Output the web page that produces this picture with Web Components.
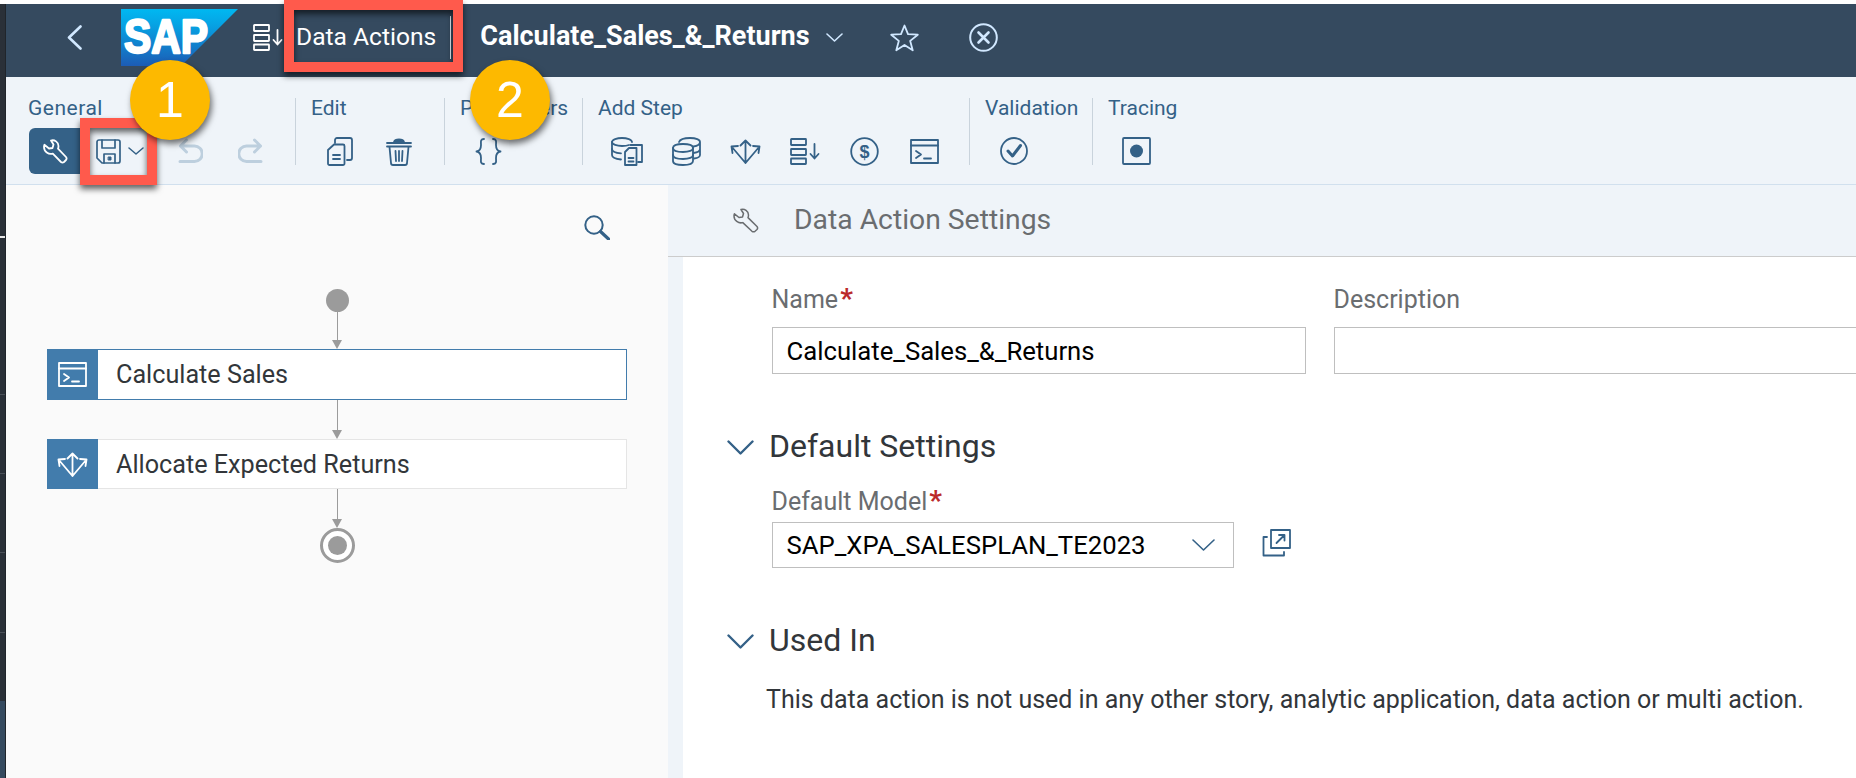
<!DOCTYPE html>
<html lang="en">
<head>
<meta charset="utf-8">
<title>Data Actions</title>
<style>
  html,body{margin:0;padding:0;background:#fff;overflow:hidden;height:778px}
  body{font-family:Roboto,"Open Sans",sans-serif}
</style>
</head>
<body>
<sac-app>
  <sac-strip slot="strip"></sac-strip>
  <sac-shellbar slot="main">
    <sac-icon name="back" style="margin-left:61px"></sac-icon>
    <sap-logo style="margin-left:39px"></sap-logo>
    <sac-icon name="list" style="margin-left:15px;color:#fff"></sac-icon>
    <shell-text style="margin-left:13px">Data Actions</shell-text>
    <shell-sep></shell-sep>
    <shell-title>Calculate_Sales_&amp;_Returns</shell-title>
    <sac-icon name="chev" style="margin-left:16px"></sac-icon>
    <sac-icon name="star" style="margin-left:47px"></sac-icon>
    <sac-icon name="xcircle" style="margin-left:50px"></sac-icon>
  </sac-shellbar>
  <sac-toolbar slot="main">
    <tb-group label="General" style="width:267px;margin-left:22px;letter-spacing:.5px">
      <tb-toggle><sac-icon name="wrench" style="color:#fff"></sac-icon></tb-toggle>
      <tb-split><sac-icon name="save"></sac-icon><sac-icon name="chevsm"></sac-icon></tb-split>
      <tb-slot style="color:#bdcfde"><sac-icon name="undo"></sac-icon></tb-slot>
      <tb-slot style="color:#bdcfde"><sac-icon name="redo"></sac-icon></tb-slot>
    </tb-group>
    <tb-sep></tb-sep>
    <tb-group label="Edit" style="width:133px;margin-left:15px">
      <tb-slot><sac-icon name="copy"></sac-icon></tb-slot>
      <tb-slot><sac-icon name="trash"></sac-icon></tb-slot>
    </tb-group>
    <tb-sep></tb-sep>
    <tb-group label="Parameters" style="width:122px;margin-left:15px">
      <tb-slot><sac-icon name="braces"></sac-icon></tb-slot>
    </tb-group>
    <tb-sep></tb-sep>
    <tb-group label="Add Step" style="width:371px;margin-left:15px">
      <tb-slot><sac-icon name="dbcopy"></sac-icon></tb-slot>
      <tb-slot><sac-icon name="db"></sac-icon></tb-slot>
      <tb-slot><sac-icon name="alloc"></sac-icon></tb-slot>
      <tb-slot><sac-icon name="list"></sac-icon></tb-slot>
      <tb-slot><sac-icon name="dollar"></sac-icon></tb-slot>
      <tb-slot><sac-icon name="console"></sac-icon></tb-slot>
    </tb-group>
    <tb-sep></tb-sep>
    <tb-group label="Validation" style="width:107px;margin-left:15px">
      <tb-slot><sac-icon name="check"></sac-icon></tb-slot>
    </tb-group>
    <tb-sep></tb-sep>
    <tb-group label="Tracing" style="width:90px;margin-left:15px">
      <tb-slot><sac-icon name="trace"></sac-icon></tb-slot>
    </tb-group>
  </sac-toolbar>
  <sac-body slot="main">
    <flow-panel slot="left">
      <flow-start></flow-start>
      <flow-link style="margin-top:-2px"></flow-link>
      <flow-node icon="console" selected>Calculate Sales</flow-node>
      <flow-link></flow-link>
      <flow-node icon="alloc">Allocate Expected Returns</flow-node>
      <flow-link></flow-link>
      <flow-end></flow-end>
    </flow-panel>
    <settings-panel slot="right">
      <span slot="title">Data Action Settings</span>
      <field-row>
        <form-field label="Name" required style="width:534px" value="Calculate_Sales_&amp;_Returns"></form-field>
        <form-field label="Description" style="width:640px;margin-left:28px"></form-field>
      </field-row>
      <section-head style="margin-top:55px">Default Settings</section-head>
      <form-select label="Default Model" value="SAP_XPA_SALESPLAN_TE2023" style="margin-top:23px"></form-select>
      <section-head style="margin-top:55px">Used In</section-head>
      <note-text>This data action is not used in any other story, analytic application, data action or multi action.</note-text>
    </settings-panel>
  </sac-body>

  <hl-box slot="over" style="left:80px;top:118px;width:77px;height:67px"></hl-box>
  <hl-box slot="over" style="left:284px;top:0;width:179px;height:72px"></hl-box>
  <call-out slot="over" style="left:130px;top:60px">1</call-out>
  <call-out slot="over" style="left:470px;top:60px">2</call-out>
</sac-app>

<script>
const ICONS = {
  back:{w:15,h:25,sw:2.6,c:'#d1e8ff',d:'<path d="M13.5 1.5 2 12.5 13.5 23.5"/>'},
  chev:{w:17,h:9,sw:1.6,c:'#d1e8ff',d:'<path d="M1 1 8.500 8 16 1"/>'},
  chevsm:{w:16,h:8,sw:1.5,d:'<path d="M1 1 8 7 15 1"/>'},
  star:{w:29,h:28,sw:1.8,c:'#d1e8ff',d:'<path d="M14.500 1.500 18 10.100 27.800 10.700 20.200 16.900 22.700 26.300 14.500 21 6.300 26.300 8.800 16.900 1.200 10.700 11 10.100Z"/>'},
  xcircle:{w:29,h:29,sw:2,c:'#d1e8ff',d:'<circle cx="14.500" cy="14.500" r="13.300"/><path stroke-width="2.600" d="M9.500 9.500 19.500 19.500M19.500 9.500 9.500 19.500"/>'},
  list:{w:30,h:27,sw:1.8,d:'<rect x="1" y="1" width="15" height="6" rx=".5"/><rect x="1" y="11" width="15" height="6" rx=".5"/><rect x="1" y="20.500" width="15" height="5.500" rx=".5"/><path d="M24.500 6V20M20.500 16 24.500 20.500 28.500 16"/>'},
  wrench:{w:25,h:25,sw:1.8,d:'<path d="M8 1.500C11.500.5 15.500 3 15.500 7 15.500 8 15.300 9 15 9.600L23 18C23.800 19 23.800 20 23 21L21 23C20 23.800 19 23.800 18 23L9.800 14.600C5.500 15.800 1 12.500 1 8 1 7.200 1.100 6.500 1.400 5.800L6 9.500 9.500 9 10.500 5.500Z"/>'},
  wrenchg:{w:26,h:25,sw:1.500,d:'<path d="M8 1.500C11.500.5 15.500 3 15.500 7 15.500 8 15.300 9 15 9.600L24 18.500C24.800 19.500 24.800 20.500 24 21.500L22 23.300C21 24 20 24 19 23.300L9.800 14.600C5.500 15.800 1 12.500 1 8 1 7.200 1.100 6.500 1.400 5.800L6 9.500 9.500 9 10.500 5.500Z"/>'},
  save:{w:25,h:25,sw:1.700,d:'<path d="M3 1H22A2 2 0 0 1 24 3V22A2 2 0 0 1 22 24H6L1 19V3A2 2 0 0 1 3 1Z"/><path d="M6 1V9H19V1M8 24V15H19V24"/><rect x="12.500" y="18" width="2.500" height="3" fill="currentColor" stroke-width="1"/>'},
  undo:{w:25,h:26,sw:3,d:'<path d="M8.500 2 2.500 8 8.500 14M2.500 8H16.500A7.500 7.500 0 0 1 16.500 23.500H2"/>'},
  redo:{w:25,h:26,sw:3,d:'<path d="M16.500 2 22.500 8 16.500 14M22.500 8H8.500A7.500 7.500 0 0 0 8.500 23.500H23"/>'},
  copy:{w:26,h:29,sw:1.800,d:'<path d="M8 6V3A2 2 0 0 1 10 1H23A2 2 0 0 1 25 3V21A2 2 0 0 1 23 23H20"/><path d="M1 13 7 7.500H16A1.500 1.500 0 0 1 17.500 9V26.500A1.500 1.500 0 0 1 16 28H2.500A1.500 1.500 0 0 1 1 26.500Z"/><path d="M6 18H13M6 22H13"/>'},
  trash:{w:26,h:29,sw:1.800,d:'<path d="M1 6H25M1 9.500H25"/><path d="M8 5C9 1.500 17 1.500 18 5Z" fill="currentColor"/><path d="M3.500 10 5 26A2 2 0 0 0 7 28H19A2 2 0 0 0 21 26L22.500 10M9.500 14 10 24M13 14V24M16.500 14 16 24"/>'},
  braces:{w:27,h:27,sw:1.800,d:'<path d="M9 1C5 1 6 4 6 7 6 11 5 13 1.500 13.500 5 14 6 16 6 20 6 23 5 26 9 26M18 1C22 1 21 4 21 7 21 11 22 13 25.500 13.500 22 14 21 16 21 20 21 23 22 26 18 26"/>'},
  dbcopy:{w:32,h:29,sw:1.800,d:'<path d="M21 5C21 2.500 16 1 11 1 6 1 1 2.500 1 5V18C1 20.500 5 22 10 22.500"/><path d="M1 5C1 7.500 6 9 11 9 13 9 16 8.800 18 8M1 12C1 14.500 5 16 10 16.300"/><path d="M14 15 18 11H25.500V28H14Z"/><path d="M19.500 8H31V25H27M17.500 21H22.500M17.500 24.500H22.500"/>'},
  db:{w:29,h:29,sw:1.800,d:'<path d="M1 11C1 8 5 7 11 7 17 7 21 8 21 11V24C21 27 17 28 11 28 5 28 1 27 1 24Z"/><path d="M1 11C1 13.500 5 15 11 15 17 15 21 13.500 21 11M1 18C1 20.500 5 22 11 22 17 22 21 20.500 21 18"/><path d="M7 5C8 2.500 13 1 18 1 24 1 28 2.500 28 5V18C28 19.500 26 21 22 21.500M21.500 9.500C25 9 28 7.500 28 5M21.500 16C25 15.500 28 14 28 12"/>'},
  alloc:{w:31,h:25,sw:1.800,d:'<path d="M15.500 24V1.500M10.500 6.500 15.500 1.500 20.500 6.500M15.500 24 1.500 7.500M15.500 24 29.500 7.500M2.500 14 1.500 7.500 8 7M28.500 14 29.500 7.500 23 7"/>'},
  dollar:{w:29,h:29,sw:1.800,d:'<circle cx="14.500" cy="14.500" r="13.300"/><text x="14.500" y="21" text-anchor="middle" font-family="Liberation Sans" font-weight="700" font-size="18" fill="currentColor" stroke="none">$</text>'},
  console:{w:29,h:25,sw:1.800,d:'<rect x="1" y="1" width="27" height="23"/><path d="M1 6.500H28M6 12 11 15.500 6 19M14 19.500H21"/>'},
  check:{w:30,h:28,sw:1.800,d:'<circle cx="15" cy="14" r="13"/><path stroke-width="3" d="M9 14 13.500 19 21.500 8.500"/>'},
  trace:{w:29,h:28,sw:1.800,d:'<rect x="1" y="1" width="27" height="26" rx="1"/><circle cx="14.500" cy="14" r="6.500" fill="currentColor" stroke="none"/>'},
  search:{w:26,h:25,sw:2,d:'<circle cx="10" cy="10" r="8.700"/><path stroke-width="3.200" d="M16.500 16.500 24.500 24"/>'},
  caret:{w:27,h:15,sw:2.400,d:'<path d="M1.500 1.500 13.500 13.500 25.500 1.500"/>'},
  selchev:{w:23,h:12,sw:1.600,d:'<path d="M1 1 11.500 11 22 1"/>'},
  open:{w:29,h:28,sw:1.800,d:'<rect x="9" y="1" width="19" height="18"/><path d="M14.500 14 22.500 6M17 6H22.500V11.500"/><path d="M5 8H1.500V26.500H22V23"/>'}
};

function define(name, css, html, init){
  customElements.define(name, class extends HTMLElement{
    constructor(){
      super();
      const r = this.attachShadow({mode:'open'});
      r.innerHTML = '<style>'+css+'</style>'+(typeof html==='function'?html(this):html);
    }
    connectedCallback(){ if(init) init(this); }
  });
}

define('sac-icon', ':host{display:inline-flex;flex:none;line-height:0}svg{display:block;fill:none;stroke:currentColor;stroke-linecap:round;stroke-linejoin:round}', '', el=>{
  const i = ICONS[el.getAttribute('name')];
  if(i.c && !el.style.color) el.style.color = i.c;
  el.shadowRoot.querySelector('style').insertAdjacentHTML('afterend',
    `<svg width="${i.w}" height="${i.h}" viewBox="0 0 ${i.w} ${i.h}" stroke-width="${i.sw}" aria-hidden="true">${i.d}</svg>`);
});

define('sac-app', `
  :host{display:grid;grid-template-columns:6px 1850px;width:1856px;height:778px;padding-top:4px;box-sizing:border-box;position:relative;overflow:hidden}
  .main{display:flex;flex-direction:column;min-width:0;height:774px}
`, `<slot name="strip"></slot><div class="main"><slot name="main"></slot></div><slot name="over"></slot>`);

define('sac-strip', `
  :host{display:flex;flex-direction:column;width:6px;height:774px;box-sizing:border-box;background:#2a3038;border-right:1px solid #20252b}
  i{display:block;flex:none;width:100%;height:1px;background:#4a5058}
  i.w{background:#e8e8e8;height:2px}
  b{display:block;flex:1;background:#354a5f}
`, `<div style="height:232px"></div><i class="w"></i><div style="height:156px"></div><i></i><div style="height:78px"></div><i></i><div style="height:78px"></div><i></i><div style="height:79px"></div><i></i><div style="height:68px"></div><b></b>`);

define('sac-shellbar', `
  :host{display:flex;align-items:center;flex:none;height:73px;box-sizing:border-box;padding-bottom:6px;background:#354a5f;color:#fff}
`, `<slot></slot>`);

define('sap-logo', `
  :host{display:block;flex:none;width:117px;height:57px}
  svg{display:block}
  text{font-family:"Liberation Sans",sans-serif;font-weight:700;fill:#fff;stroke:#fff;stroke-width:2.400px;stroke-linejoin:round}
`, `<svg width="117" height="57" viewBox="0 0 117 57"><defs><linearGradient id="g" x1="0" y1="0" x2="0" y2="1"><stop offset="0" stop-color="#00b8f1"/><stop offset=".25" stop-color="#06a5e5"/><stop offset="1" stop-color="#1c5cb5"/></linearGradient></defs><path d="M0 0H117L60 57H0Z" fill="url(#g)"/><text x="3" y="44" font-size="49" textLength="84" lengthAdjust="spacingAndGlyphs">SAP</text></svg>`);

define('shell-text', `:host{display:block;flex:none;font-size:24.600px;line-height:30px;margin-top:-2px;color:#fff}`, `<slot></slot>`);
define('shell-sep', `:host{display:block;flex:none;width:1px;height:43px;margin-left:14px;background:#e4eaf0}`, ``);
define('shell-title', `:host{display:block;flex:none;margin-left:29px;margin-top:-3px;font-size:27px;line-height:30px;font-weight:700;color:#fff}`, `<slot></slot>`);

define('sac-toolbar', `
  :host{display:flex;align-items:flex-start;flex:none;height:107px;background:#eff4f9;border-bottom:1px solid #d1e0ee;box-sizing:content-box;color:#346187}
`, `<slot></slot>`);

define('tb-group', `
  :host{display:block;flex:none;padding-top:21px;box-sizing:border-box}
  .l{font-size:21px;line-height:20px;color:#346187;white-space:nowrap;height:20px}
  .r{display:flex;align-items:center;height:46px;margin:10px 0 0 -1px}
`, el=>`<div class="l">${el.getAttribute('label')}</div><div class="r"><slot></slot></div>`);
define('tb-sep', `:host{display:block;flex:none;width:1px;height:67px;margin-top:21px;background:#c9d3dc}`, ``);
define('tb-slot', `:host{display:flex;flex:none;width:59.500px;height:46px;align-items:center;justify-content:center}`, `<slot></slot>`);
define('tb-toggle', `:host{display:flex;flex:none;width:52px;height:46px;margin-left:2px;align-items:center;justify-content:center;background:#346187;border-radius:6px 0 0 6px}`, `<slot></slot>`);
define('tb-split', `:host{display:flex;flex:none;width:80px;height:46px;align-items:center;gap:7px;box-sizing:border-box;padding-left:15px}`, `<slot></slot>`);

define('sac-body', `
  :host{display:flex;flex:1;min-height:0}
  ::slotted([slot=left]){flex:none;width:662px}
  ::slotted([slot=right]){flex:1;min-width:0}
`, `<slot name="left"></slot><slot name="right"></slot>`);

define('flow-panel', `
  :host{display:flex;flex-direction:column;background:#fafafa;box-sizing:border-box;height:593px}
  .s{display:flex;justify-content:flex-end;padding:30px 58px 0 0;height:25px;box-sizing:content-box}
  .c{display:flex;flex-direction:column;align-items:center;width:580px;margin:49px 0 0 41px}
`, `<div class="s"><sac-icon name="search" style="color:#346187"></sac-icon></div><div class="c"><slot></slot></div>`);
define('flow-start', `:host{display:block;flex:none;width:23px;height:23px;border-radius:50%;background:#9b9b9b}`, ``);
define('flow-link', `
  :host{display:flex;flex-direction:column;align-items:center;flex:none}
  .l{width:1px;height:30px;background:#9b9b9b}
  .a{width:0;height:0;border-left:5.500px solid transparent;border-right:5.500px solid transparent;border-top:9px solid #9b9b9b}
`, `<div class="l"></div><div class="a"></div>`);
define('flow-node', `
  :host{display:flex;flex:none;align-self:stretch;height:50px;box-sizing:border-box;background:#fff;border:1px solid #e5e5e5;border-left:0;color:#32363a;font-size:25.200px}
  :host([selected]){height:51px;border-color:#427cac}
  .i{display:flex;flex:none;width:51px;margin:-1px 0;align-items:center;justify-content:center;background:#427cac;color:#fff}
  .t{display:flex;align-items:center;padding-left:18px;white-space:nowrap}
`, el=>`<div class="i"><sac-icon name="${el.getAttribute('icon')}"></sac-icon></div><div class="t"><slot></slot></div>`);
define('flow-end', `
  :host{display:flex;flex:none;width:35px;height:35px;box-sizing:border-box;border:3px solid #9b9b9b;border-radius:50%;align-items:center;justify-content:center;background:#fff}
  i{display:block;width:19px;height:19px;border-radius:50%;background:#9b9b9b}
`, `<i></i>`);

define('settings-panel', `
  :host{display:flex;flex-direction:column;background:#eff4f9;height:593px;overflow:hidden}
  .h{display:flex;align-items:center;flex:none;height:71px;box-sizing:content-box;padding-left:65px;border-bottom:1px solid #cccccc;color:#6a6d70}
  .t{margin-left:35px;font-size:28.300px;line-height:32px;margin-top:-2px;color:#6a6d70}
  .c{flex:1;margin-left:15px;background:#fff;padding:29px 0 0 88.500px;overflow:hidden}
`, `<div class="h"><sac-icon name="wrenchg"></sac-icon><div class="t"><slot name="title"></slot></div></div><div class="c"><slot></slot></div>`);
define('field-row', `:host{display:flex;white-space:nowrap}`, `<slot></slot>`);
define('form-field', `
  :host{display:block;flex:none}
  .l{font-size:25px;line-height:28px;color:#6a6d70;white-space:nowrap}
  .r{color:#bb2a2a;font-weight:700;margin-left:2px;font-size:28px;line-height:20px}
  .b{height:47px;margin-top:13px;box-sizing:border-box;border:1px solid #bfbfbf;background:#fff;padding:0 14px;display:flex;align-items:center;font-size:25.700px;color:#000;white-space:nowrap}
`, el=>`<div class="l">${el.getAttribute('label')}${el.hasAttribute('required')?'<span class="r">*</span>':''}</div><div class="b">${(el.getAttribute('value')||'').replace(/&/g,'&amp;')}</div>`);
define('section-head', `
  :host{display:flex;align-items:center;height:36px;box-sizing:border-box;padding-bottom:2px;margin-left:-44.500px;font-size:32px;color:#32363a;white-space:nowrap}
  sac-icon{color:#346187;margin-right:15px;margin-top:3px}
`, `<sac-icon name="caret"></sac-icon><slot></slot>`);
define('form-select', `
  :host{display:block}
  .l{font-size:25px;line-height:28px;color:#6a6d70;white-space:nowrap}
  .r{color:#bb2a2a;font-weight:700;margin-left:2px;font-size:28px;line-height:20px}
  .w{display:flex;align-items:center;margin-top:6px}
  .b{width:462px;height:46px;box-sizing:border-box;border:1px solid #bfbfbf;background:#fff;padding:0 18px 0 14px;display:flex;align-items:center;justify-content:space-between;font-size:25.700px;color:#000;white-space:nowrap}
  .o{margin-left:28px;color:#346187;margin-top:-4px}
  sac-icon.d{color:#346187}
`, el=>`<div class="l">${el.getAttribute('label')}<span class="r">*</span></div><div class="w"><div class="b"><span>${el.getAttribute('value')}</span><sac-icon class="d" name="selchev"></sac-icon></div><sac-icon class="o" name="open"></sac-icon></div>`);
define('note-text', `:host{display:block;margin:27px 0 0 -5.500px;font-size:25px;line-height:28px;color:#32363a;white-space:nowrap}`, `<slot></slot>`);

define('hl-box', `:host{display:block;position:absolute;box-sizing:border-box;border:10px solid #ff5a4c;filter:drop-shadow(0 4px 3px rgba(0,0,0,.62))}`, ``);
define('call-out', `
  :host{display:flex;position:absolute;width:80px;height:80px;border-radius:50%;background:#fdb900;box-shadow:2px 4px 6px rgba(0,0,0,.55);align-items:center;justify-content:center;font:400 50px/1 "Liberation Sans",sans-serif;color:#fff}
`, `<slot></slot>`);
</script>
</body>
</html>
